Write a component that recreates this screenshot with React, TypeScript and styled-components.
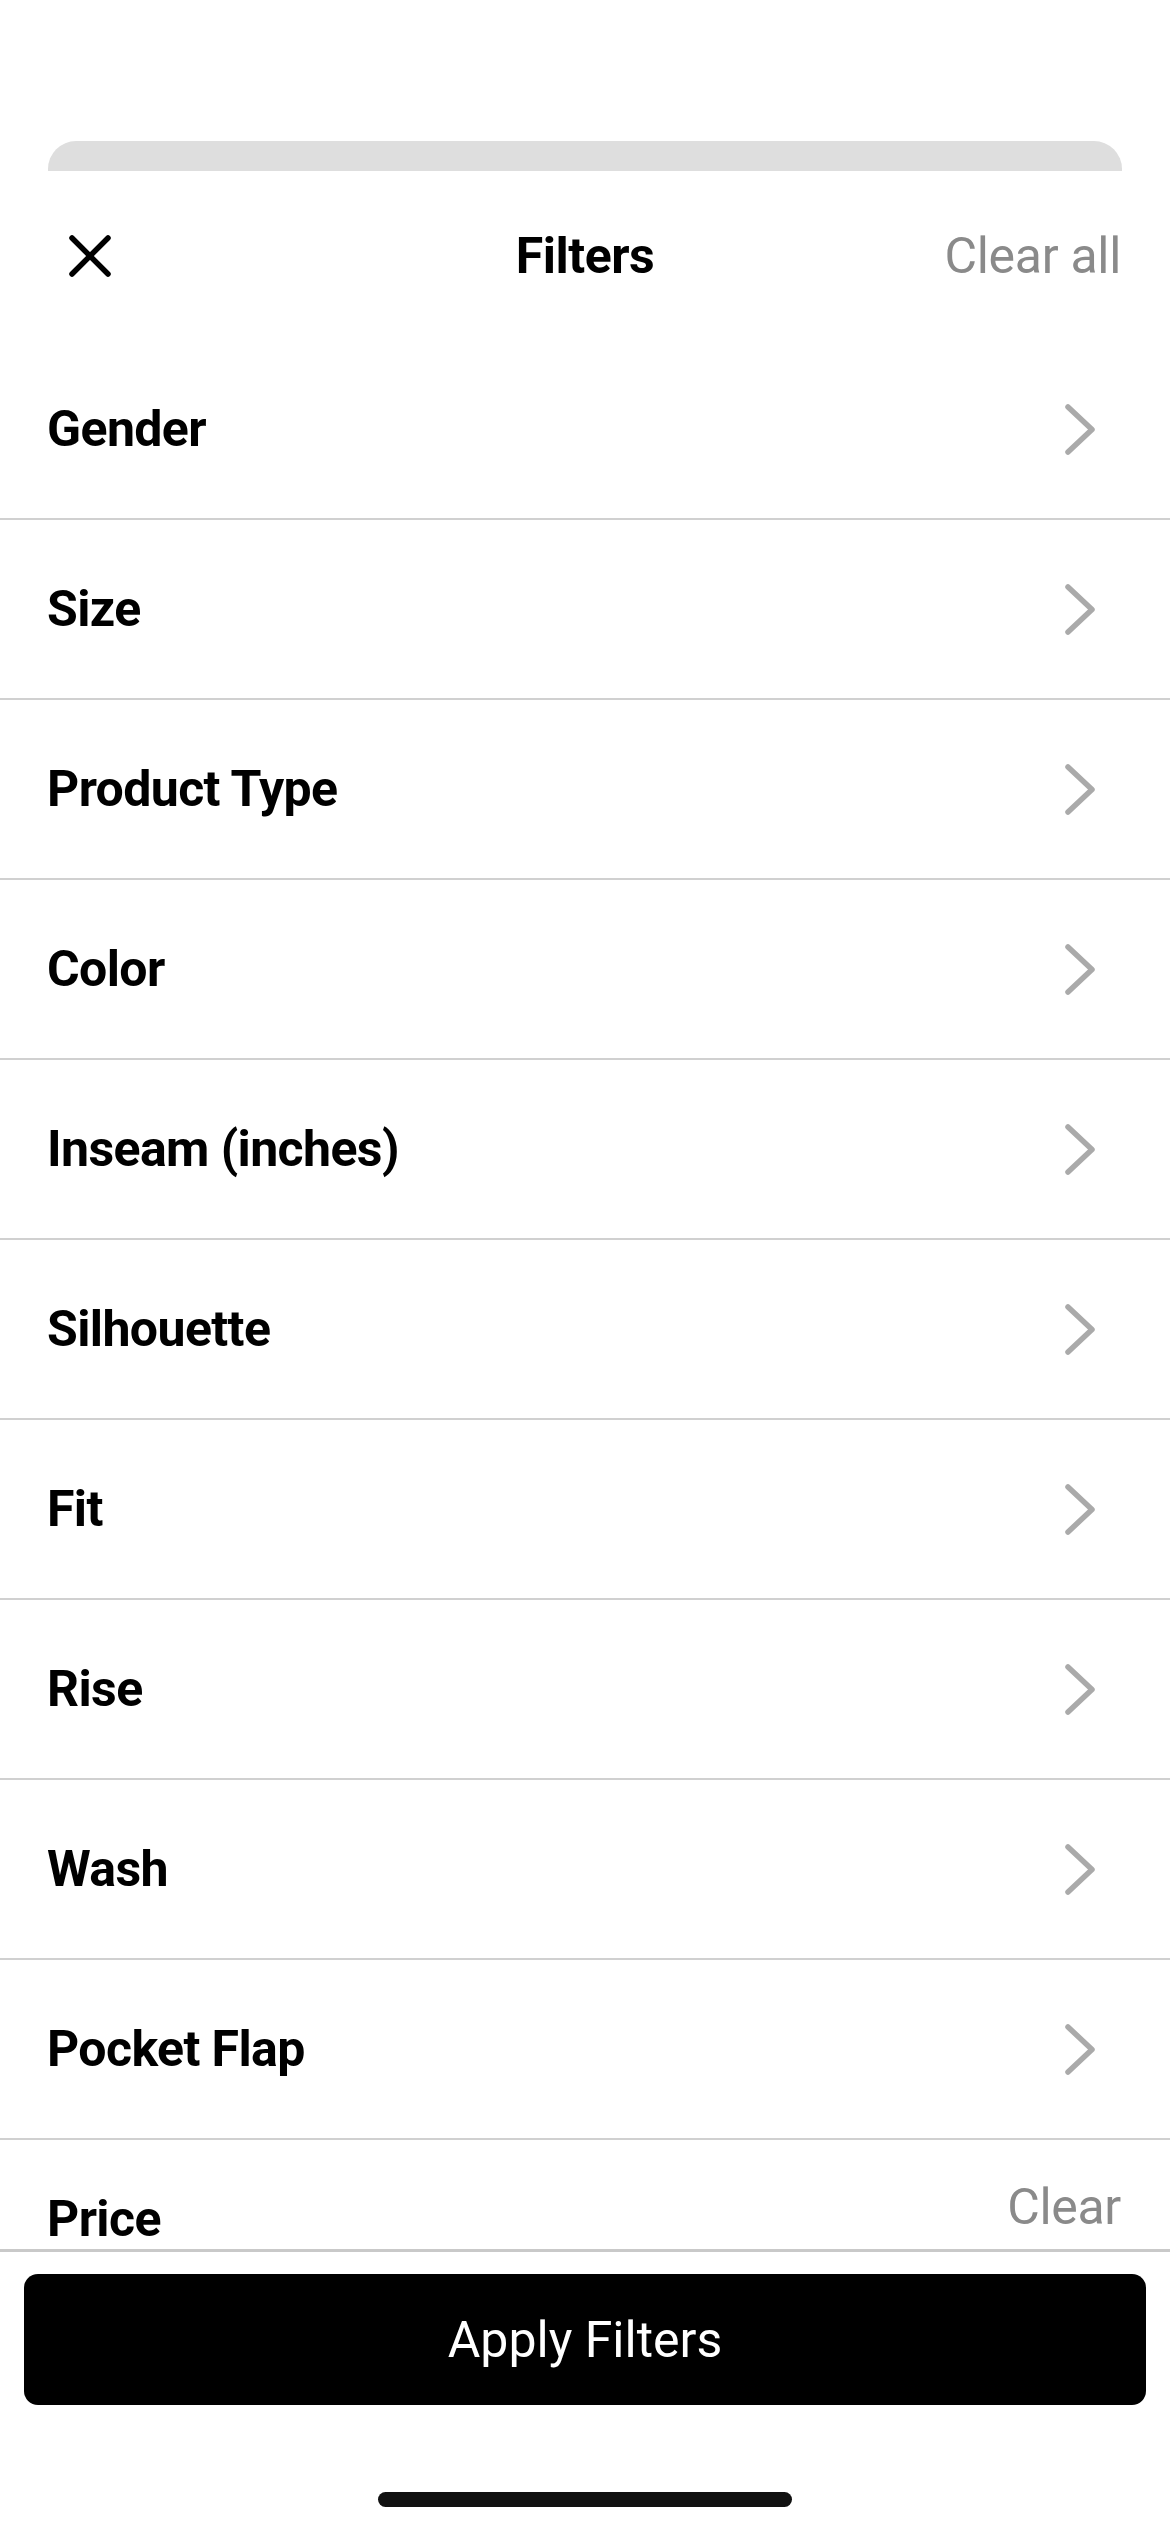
import React from "react";
import styled, { createGlobalStyle } from "styled-components";

const GlobalStyle = createGlobalStyle`
  html, body {
    margin: 0;
    padding: 0;
    background: #fff;
  }
  * {
    box-sizing: border-box;
  }
`;

const Page = styled.div`
  width: 100%;
  height: 2532px;
  display: flex;
  flex-direction: column;
  background: #fff;
  font-family: Roboto, "Liberation Sans", Arial, sans-serif;
  color: #000;
  overflow: hidden;
`;

const StatusSpace = styled.div`
  height: 141px;
  flex-shrink: 0;
`;

const BackCard = styled.div`
  height: 30px;
  margin: 0 48px;
  flex-shrink: 0;
  background: #dedede;
  border-radius: 28px 28px 0 0;
`;

const Sheet = styled.div`
  flex: 1;
  min-height: 0;
  display: flex;
  flex-direction: column;
  background: #fff;
`;

const Header = styled.div`
  height: 169px;
  flex-shrink: 0;
  display: grid;
  grid-template-columns: 1fr auto 1fr;
  align-items: center;
  padding: 0 49px;
`;

const CloseButton = styled.button`
  justify-self: start;
  width: 42px;
  height: 42px;
  margin-left: 20px;
  padding: 0;
  border: none;
  background: none;
  display: flex;
  cursor: pointer;
`;

const Title = styled.h1`
  margin: 0;
  font-size: 50px;
  line-height: 60px;
  font-weight: 700;
  letter-spacing: -0.5px;
`;

const GrayLink = styled.span`
  justify-self: end;
  font-size: 50px;
  line-height: 60px;
  font-weight: 400;
  color: #8a8a8a;
  letter-spacing: -0.3px;
`;

const List = styled.div`
  flex: 1;
  min-height: 0;
  overflow: hidden;
  border-bottom: 3px solid #c9c9c9;
`;

const Row = styled.div`
  height: 180px;
  display: flex;
  align-items: center;
  justify-content: space-between;
  padding: 0 75px 0 47px;
  border-bottom: 2px solid #d0d0d0;
`;

const PriceRow = styled.div`
  display: flex;
  align-items: flex-start;
  justify-content: space-between;
  padding: 37px 49px 0 47px;
`;

const Label = styled.span<{ $offset?: number }>`
  font-size: 50px;
  line-height: 60px;
  font-weight: 700;
  letter-spacing: -0.6px;
  margin-top: ${(p) => p.$offset ?? 0}px;
`;

const Footer = styled.div`
  flex-shrink: 0;
  display: flex;
  flex-direction: column;
  align-items: center;
  padding: 22px 24px 25px;
`;

const ApplyButton = styled.button`
  width: 100%;
  height: 131px;
  border: none;
  border-radius: 14px;
  background: #000;
  color: #fff;
  font-family: Roboto, "Liberation Sans", Arial, sans-serif;
  font-size: 50px;
  font-weight: 400;
  cursor: pointer;
`;

const HomeIndicator = styled.div`
  width: 414px;
  height: 15px;
  margin-top: 87px;
  border-radius: 8px;
  background: #111;
`;

const CloseIcon = () => (
  <svg width="42" height="42" viewBox="0 0 42 42" fill="none">
    <path
      d="M3 3L39 39M39 3L3 39"
      stroke="#000"
      strokeWidth="5.5"
      strokeLinecap="round"
    />
  </svg>
);

const Chevron = () => (
  <svg width="30" height="51" viewBox="0 0 30 51" fill="none">
    <path
      d="M3 3L27 25.5L3 48"
      stroke="#aaaaaa"
      strokeWidth="5.5"
      strokeLinecap="round"
      strokeLinejoin="round"
    />
  </svg>
);

const filters = [
  "Gender",
  "Size",
  "Product Type",
  "Color",
  "Inseam (inches)",
  "Silhouette",
  "Fit",
  "Rise",
  "Wash",
  "Pocket Flap",
];

export default function App() {
  return (
    <>
      <GlobalStyle />
      <Page>
        <StatusSpace />
        <BackCard />
        <Sheet>
          <Header>
            <CloseButton aria-label="Close">
              <CloseIcon />
            </CloseButton>
            <Title>Filters</Title>
            <GrayLink>Clear all</GrayLink>
          </Header>
          <List>
            {filters.map((name) => (
              <Row key={name}>
                <Label>{name}</Label>
                <Chevron />
              </Row>
            ))}
            <PriceRow>
              <Label $offset={12}>Price</Label>
              <GrayLink>Clear</GrayLink>
            </PriceRow>
          </List>
          <Footer>
            <ApplyButton>Apply Filters</ApplyButton>
            <HomeIndicator />
          </Footer>
        </Sheet>
      </Page>
    </>
  );
}
